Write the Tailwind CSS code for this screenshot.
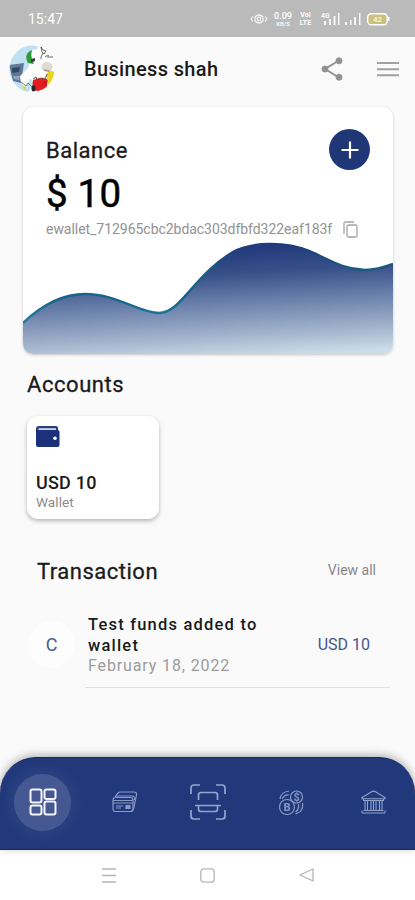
<!DOCTYPE html>
<html lang="en">
<head>
<meta charset="utf-8">
<meta name="viewport" content="width=device-width, initial-scale=1">
<title>Wallet</title>
<script src="https://cdn.jsdelivr.net/npm/@tailwindcss/browser@4"></script>
</head>
<body class="bg-[#fafafa]">
<div class="w-[415px] h-[900px] flex flex-col overflow-hidden bg-[#fafafa] font-[Roboto,sans-serif] text-[#1a1a1a]">
  <!-- Status bar -->
  <div class="h-[37px] shrink-0 bg-[#bababa] flex items-center justify-between pl-7 pr-[25px] text-white">
    <span class="text-[14px] leading-5 tracking-[0px] pt-px">15:47</span>
    <div class="flex items-center h-5 mt-px">
      <svg class="w-[18px] h-[14px]" viewBox="0 0 18 14" fill="none" stroke="#f5f5f5" stroke-width="1.2"><path d="M3 4.500 1 7l2 2.500M15 4.500l2 2.500-2 2.500M5 5Q9 1 13 5M5 9Q9 13 13 9M5 5v4M13 5v4"/><circle cx="9" cy="7" r="1.800"/></svg>
      <div class="ml-[5px] w-[20px] flex flex-col items-center text-[9px] leading-[8px] font-medium"><span>0.09</span><span class="text-[6px] leading-[7px]">KB/S</span></div>
      <div class="ml-[5px] w-[15px] flex flex-col items-center text-[7px] leading-[8px] font-bold"><span>VoI</span><span>LTE</span></div>
      <svg class="ml-[8px] w-[19px] h-[14px]" viewBox="0 0 19 14" fill="#f7f7f7"><path d="M3 9h2v4H3zM8 7h2v6H8zM12.500 4h2v9h-2zM17 1h1.500v12H17z"/><text x="0" y="6" font-size="7" font-family="Roboto" font-weight="700">4G</text></svg>
      <svg class="ml-[5px] w-[16px] h-[14px]" viewBox="0 0 16 14" fill="#f7f7f7"><path d="M0 10h2v3H0zM5 8h1.500v5H5zM9 5h2v8H9zM14 1h1.500v12H14z"/></svg>
      <svg class="ml-[6px] w-[23px] h-[14px]" viewBox="0 0 23 14"><rect x=".7" y="1.700" width="19.500" height="11" rx="3.500" fill="#c9c17c" stroke="#fff" stroke-width="1.400"/><path d="M21.800 5v4" stroke="#fff" stroke-width="1.500"/><text x="6" y="10" font-size="8" font-family="Roboto" font-weight="700" fill="#f4f0c8">42</text></svg>
    </div>
  </div>

  <!-- App header -->
  <header class="h-[70px] shrink-0 flex items-center pl-[9px] pr-[16px] pb-[6px]">
    <svg class="w-[46px] h-[48px]" viewBox="0 0 46 48">
      <defs><clipPath id="av"><ellipse cx="23" cy="24" rx="22.500" ry="23.500"/></clipPath></defs>
      <g clip-path="url(#av)">
        <rect width="46" height="48" fill="#fdfdfc"/>
        <path d="M0 0h30l-9 17-4 12 9 10-8 9H0z" fill="#bfe1f2"/>
        <path d="M0 20l15-2-3 20-8-2z" fill="#60779a"/><path d="M3 23l8-1-1 5-7 1z" fill="#33475f"/><path d="M4 31l7 0-1 4-5-1z" fill="#8ea4bf"/>
        <path d="M22 6q6-4 8 1l-2 12-6 1z" fill="#fff"/><path d="M23 5q-9 4-4 13l6 1q-4-7-2-14z" fill="#2e9838"/><path d="M22 14l4-1v3l-4 2z" fill="#38434c"/>
        <path d="M20 22h12l-3 11-8 1-4 9q-6-4-6-12z" fill="#fbfbfa"/><path d="M12 37l5 4 2-3 4 4" stroke="#777b70" fill="none" stroke-width="1"/><path d="M13 41l4 1-1 3z" fill="#e7c932"/>
        <ellipse cx="38" cy="22" rx="5.500" ry="5" fill="#dedbd0"/><path d="M35 25l5 1 1 4" stroke="#a8987f" stroke-width="1.500" fill="none"/>
        <path d="M38 28q5-4 8 0l-2 10-7 2z" fill="#ecd51f"/><path d="M24 35l6-2 8 1v9l-9 3-6-1z" fill="#e31c20"/>
        <path d="M24 34l3-2 1 3 4-2 4 1 2-5" stroke="#794646" fill="none"/><ellipse cx="24.500" cy="43.500" rx="2" ry="3" fill="#292429"/><path d="M34 38l5-3-2 6z" fill="#c41620"/>
      </g>
      <path d="M32 2l2 3 3 1-2 3-2-2zM34 8l-2 4M36 12q3-3 4-1M38 12h6M31 13h2" stroke="#444" stroke-width=".8" fill="none"/>
    </svg>
    <h1 class="ml-[29px] text-[20px] leading-6 font-medium tracking-[0.35px] whitespace-nowrap">Business shah</h1>
    <svg class="ml-auto w-[22px] h-[24px]" viewBox="0 0 22 24" fill="#929292" stroke="#929292"><path d="M18 3.500 4 12l14 8.500" fill="none" stroke-width="2"/><circle cx="18" cy="3.800" r="3" /><circle cx="4" cy="12" r="3"/><circle cx="18" cy="20.200" r="3"/></svg>
    <svg class="ml-[34px] w-[22px] h-[16px]" viewBox="0 0 22 16" stroke="#a0a0a0" stroke-width="2"><path d="M0 2h22M0 8.200h22M0 14.300h22"/></svg>
  </header>

  <!-- Balance -->
  <section class="ml-[23px] w-[370px] h-[247px] shrink-0 bg-white rounded-[10px] shadow-[0_1px_3px_rgba(0,0,0,0.22)] flex flex-col overflow-hidden">
    <div class="h-[137px] shrink-0 pl-[23px] pr-[23px] flex flex-col">
      <div class="flex justify-between h-[62px]">
        <h2 class="mt-[30px] text-[22px] leading-[28px] tracking-[0.5px] [-webkit-text-stroke:0.3px]">Balance</h2>
        <div class="mt-[22px] size-[41px] rounded-full bg-[#203777] flex items-center justify-center"><svg class="size-[18px]" viewBox="0 0 18 18" stroke="#fff" stroke-width="2.200"><path d="M9 .5v17M.5 9h17"/></svg></div>
      </div>
      <div class="mt-[3px] text-[38.500px] leading-[44px] tracking-[0.2px] text-black whitespace-nowrap [-webkit-text-stroke:0.5px]">$ 10</div>
      <div class="mt-[4px] flex items-center h-[18px]">
        <span class="text-[14px] leading-[18px] tracking-[-0.04px] text-[#929292] w-[297px] whitespace-nowrap">ewallet_712965cbc2bdac303dfbfd322eaf183f</span>
        <svg class="w-[15px] h-[17px] shrink-0" viewBox="0 0 15 17" fill="none" stroke="#a3a3a3" stroke-width="1.300"><path d="M1 13V2.500Q1 1 2.500 1H11"/><rect x="4" y="4" width="10" height="12" rx="1.500"/></svg>
      </div>
    </div>
    <svg class="w-[370px] h-[110px] shrink-0 overflow-visible" viewBox="0 0 370 110">
      <defs>
        <linearGradient id="fill" gradientUnits="userSpaceOnUse" x1="240" y1="0" x2="246" y2="112"><stop offset="0" stop-color="#21387b"/><stop offset=".25" stop-color="#385089"/><stop offset=".55" stop-color="#7388b0"/><stop offset=".8" stop-color="#a3b4cd"/><stop offset="1" stop-color="#cbdde7"/></linearGradient>
        <linearGradient id="line" gradientUnits="userSpaceOnUse" x1="0" y1="0" x2="0" y2="80"><stop offset="0" stop-color="#203979"/><stop offset=".35" stop-color="#1d5e87"/><stop offset=".7" stop-color="#15658c"/><stop offset="1" stop-color="#267f9d"/></linearGradient>
      </defs>
      <path d="M0 79C20 60 40 50 62 50C94 50 116 69 136 69C158 69 171 31 210 8C228-2 262-3 286 7C307 16 318 25 342 26C352 26 362 23 370 20V110H0z" fill="url(#fill)"/>
      <path d="M0 79C20 60 40 50 62 50C94 50 116 69 136 69C158 69 171 31 210 8C228-2 262-3 286 7C307 16 318 25 342 26C352 26 362 23 370 20" fill="none" stroke="url(#line)" stroke-width="2.500"/>
    </svg>
  </section>

  <!-- Accounts -->
  <section class="h-[192px] shrink-0 pl-[27px] pt-[17px]">
    <h2 class="text-[22px] leading-[28px] tracking-[0.55px] [-webkit-text-stroke:0.3px]">Accounts</h2>
    <div class="mt-[17px] w-[132px] h-[103px] bg-white rounded-[11px] shadow-[0_2px_4px_rgba(0,0,0,0.28)] pl-[9px] pt-[10px] flex flex-col">
      <svg class="w-[24px] h-[21px]" viewBox="0 0 24 21"><path d="M3 0h17q2 0 2 2v3H0V3Q0 0 3 0z" fill="#2a3d80"/><path d="M2.500 2.200H20V4.500H2.500z" fill="#cfd5e6"/><path d="M0 4h21.500Q23.500 4 23.500 6v13q0 2-2 2H2q-2 0-2-2z" fill="#1d307a"/><circle cx="19" cy="12.300" r="1.800" fill="#fff"/></svg>
      <div class="mt-[25px] text-[18px] leading-[22px] font-medium tracking-[0.2px]">USD 10</div>
      <div class="text-[13.500px] leading-[16px] text-[#8a8a8a] tracking-[0.1px]">Wallet</div>
    </div>
  </section>

  <!-- Transactions -->
  <section class="h-[211px] shrink-0 pt-[11px]">
    <div class="flex items-center justify-between pl-[37px] pr-[39px]">
      <h2 class="text-[22px] leading-[28px] tracking-[0.5px] pt-px [-webkit-text-stroke:0.3px]">Transaction</h2>
      <a class="text-[14px] leading-5 text-[#888] pb-[3px]">View all</a>
    </div>
    <div class="ml-[28px] mt-[28px] flex">
      <div class="mt-[7px] size-[47px] rounded-full bg-[#fdfdfd] flex items-center justify-center text-[18px] text-[#4a5b8e]">C</div>
      <div class="ml-[10px] w-[305px] h-[74px] border-b border-[#e0e0e0] flex justify-between pl-[3px] pr-[20px]">
        <div class="w-[190px]">
          <p class="text-[16.500px] leading-[21px] font-medium tracking-[1.2px]">Test funds added to wallet</p>
          <p class="text-[16px] leading-[20px] tracking-[0.88px] text-[#9c9c9c] whitespace-nowrap">February 18, 2022</p>
        </div>
        <div class="mt-[20px] text-[16px] leading-[22px] text-[#46568c] whitespace-nowrap">USD 10</div>
      </div>
    </div>
  </section>

  <!-- Bottom navigation -->
  <nav class="h-[93px] shrink-0 rounded-t-[36px] bg-[#21397b] border-y border-[#152567] shadow-[0_-2px_9px_rgba(0,0,0,0.3)] flex items-center pl-[14px] pb-[3px] relative">
    <div class="size-[57px] rounded-full bg-[#465892] shadow-[0_0_18px_rgba(255,255,255,0.1)] flex items-center justify-center">
      <svg class="size-[28px]" viewBox="0 0 28 28" fill="none" stroke="#f4f6ff" stroke-width="2"><rect x="1.500" y="1.500" width="11" height="13" rx="2"/><rect x="15.500" y="1.500" width="11" height="9.500" rx="2"/><rect x="1.500" y="17.500" width="11" height="9" rx="2"/><rect x="15.500" y="13.500" width="11" height="13" rx="2"/></svg>
    </div>
    <svg class="w-[26px] h-[22px] ml-[41px]" viewBox="0 0 26 22" fill="none" stroke="#8998c4" stroke-width="1.200"><rect x="1" y="6.500" width="20" height="14" rx="2.500"/><path d="M1 9.500h20M1 12h20M3 6l3-4q1-1 3-1h13q3 0 2.500 3L22 16q-1 4-3 4.500M4 5h16q3 0 2.500 4"/><path d="M4 15h7M4 17h5"/><path d="M14 14.500h4v3h-4z" fill="#8998c4"/></svg>
    <svg class="w-[36px] h-[37px] ml-[52px]" viewBox="0 0 36 37" fill="none" stroke="#93a5d1" stroke-width="1.700"><path d="M1 10V4q0-3 3-3h6M26 1h6q3 0 3 3v6M1 26v6q0 3 3 3h6M26 35h6q3 0 3-3v-6"/><path d="M8.500 16v-5q0-2.500 2.500-2.500h14q2.500 0 2.500 2.500v5M5 21.500h26M8.500 21.500V25q0 2.500 2.500 2.500h14q2.500 0 2.500-2.500v-3.500"/></svg>
    <svg class="w-[26px] h-[25px] ml-[52px]" viewBox="0 0 26 25" fill="none" stroke="#8998c4" stroke-width="1.200"><circle cx="9" cy="17" r="7.500"/><circle cx="18.500" cy="7" r="6"/><path d="M2 9q1-7 9-8M24.500 13q1 7-4 9.500l-3 1.500M20.500 14q1 5-3 8M4 9q3-5 7-4"/><text x="5.500" y="21" font-family="Roboto" font-size="11" font-weight="700" stroke="none" fill="#8998c4">B</text><text x="15.800" y="10.500" font-family="Roboto" font-size="10" font-weight="700" stroke="none" fill="#8998c4">$</text></svg>
    <svg class="w-[25px] h-[24px] ml-[57px]" viewBox="0 0 25 24" fill="none" stroke="#93a2cb" stroke-width="1.100"><path d="M1 7.500 11 1.500q1.500-.8 3 0l10 6v1.300H1zM2.500 9v1.500h20V9M2.500 20.500h20M1 23h23M1 20.500V23M24 20.500V23"/><path d="M4 10.500v10M6.500 10.500v10M10 10.500v10M12.500 10.500v10M15 10.500v10M18.500 10.500v10M21 10.500v10"/></svg>
  </nav>

  <!-- System navigation -->
  <div class="h-[50px] shrink-0 bg-white flex items-center pl-[102px] text-[#b5b5b5]">
    <svg class="w-[14px] h-[15px]" viewBox="0 0 14 15" stroke="currentColor" stroke-width="1.300"><path d="M0 1h14M0 7.500h14M0 14h14"/></svg>
    <svg class="ml-[84px] size-[15px]" viewBox="0 0 15 15" fill="none" stroke="currentColor" stroke-width="1.300"><rect x=".8" y=".8" width="13.400" height="13.400" rx="3"/></svg>
    <svg class="ml-[84px] w-[15px] h-[14px]" viewBox="0 0 15 14" fill="none" stroke="currentColor" stroke-width="1.300" stroke-linejoin="round"><path d="M14 1v12L1 7z"/></svg>
  </div>
</div>
</body>
</html>
